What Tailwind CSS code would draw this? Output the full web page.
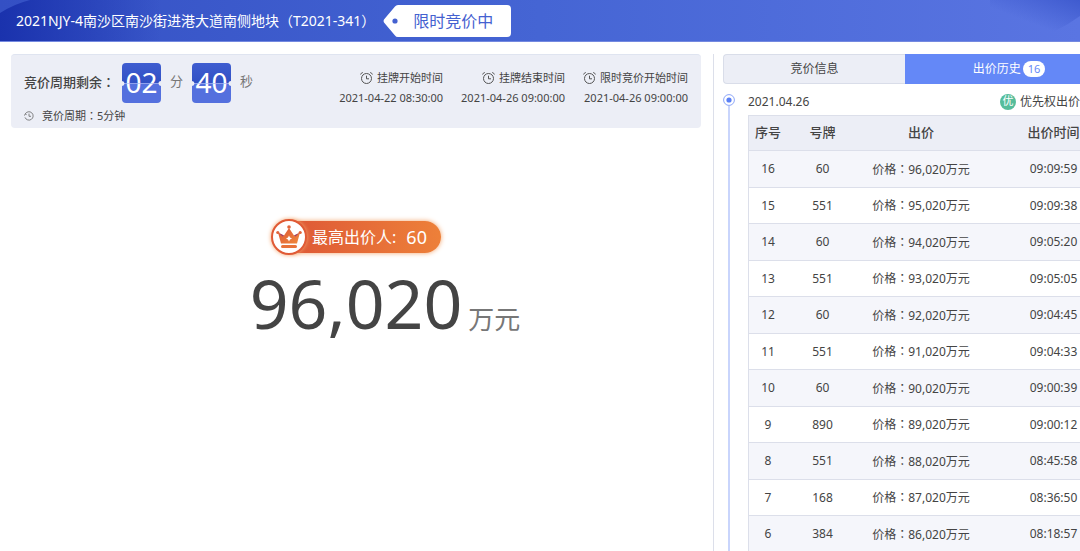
<!DOCTYPE html>
<html lang="zh-CN">
<head>
    <meta charset="UTF-8">
    <meta name="viewport" content="width=device-width, initial-scale=1.0">
    <title>限时竞价</title>
    <script src="https://cdn.jsdelivr.net/npm/@tailwindcss/browser@4"></script>
</head>
<body class="min-h-screen flex flex-col overflow-hidden bg-white text-[#444] font-['Noto_Sans','Noto_Sans_CJK_SC',sans-serif]">
    <!-- Header -->
    <header class="relative h-[42px] shrink-0 flex items-center pl-4 text-white bg-linear-to-r from-[#3450c4] via-[#4565d4] to-[#5a75e2] border-b border-[#7489e0]">
        <svg class="absolute left-0 top-0 w-[160px] h-[41px]" viewBox="0 0 160 41" aria-hidden="true">
            <defs>
                <linearGradient id="arc-left" x1="0" y1="0" x2="1" y2="0">
                    <stop offset="0" stop-color="#1a32ad"/>
                    <stop offset="1" stop-color="#1a32ad" stop-opacity="0"/>
                </linearGradient>
            </defs>
            <path d="M0 13 Q14 4 30 0 H160 V41 H0Z" fill="url(#arc-left)"/>
        </svg>
        <svg class="absolute right-0 top-0 w-[90px] h-[41px]" viewBox="0 0 90 41" aria-hidden="true">
            <defs>
                <linearGradient id="arc-right" x1="0.5" y1="0.6" x2="1" y2="0">
                    <stop offset="0" stop-color="#3f5bcf" stop-opacity="0"/>
                    <stop offset="1" stop-color="#3f5bcf"/>
                </linearGradient>
            </defs>
            <path d="M0 0 H90 V16 Q68 32 40 41 H0Z" fill="url(#arc-right)"/>
        </svg>
        <h1 class="relative text-sm whitespace-nowrap">2021NJY-4南沙区南沙街进港大道南侧地块<span lang="zh-TW" class="font-['Noto_Sans_CJK_TC',sans-serif]">（</span>T2021-341<span lang="zh-TW" class="font-['Noto_Sans_CJK_TC',sans-serif]">）</span></h1>
        <div class="relative flex h-8 ml-2 text-[#4461d0]">
            <svg class="w-4 h-8" viewBox="0 0 16 32" aria-hidden="true">
                <path d="M16 0 H15 Q13 0 12 1.5 L1 14.5 Q0 16 1 17.5 L12 30.5 Q13 32 15 32 H16Z" fill="#fff"/>
                <circle cx="12" cy="16" r="2.6" fill="#4461d0"/>
            </svg>
            <span class="flex items-center rounded-r bg-white pl-[14px] pr-[18px] text-base whitespace-nowrap">限时竞价中</span>
        </div>
    </header>

    <div class="flex flex-1">
        <!-- Left: countdown and current price -->
        <main class="flex-1 min-w-0 pt-3 pl-[11px] pr-3">
            <section class="flex justify-between rounded-sm border-t border-[#dfe4f0] bg-[#eceef6] px-[13px] h-[74px]">
                <div class="pt-2">
                    <div class="flex items-center text-[13px]">
                        <span class="pb-[2px] font-medium text-[#444]">竞价周期剩余<span lang="zh-TW" class="font-['Noto_Sans_CJK_TC',sans-serif]">：</span></span>
                        <span class="relative ml-[7px] w-[39px] h-10 pb-[2px] rounded-sm bg-linear-to-b from-[#3f5dd0] from-0% via-[#3150c4] via-50% to-[#5470de] to-50% flex items-center justify-center text-[28px] leading-10 text-white">02
                            <svg class="absolute inset-0 w-full h-full" viewBox="0 0 39 40" aria-hidden="true">
                                <path d="M0 20.5H39" stroke="#a9b8f2" stroke-opacity=".7"/>
                                <path d="M0 18 A2.5 2.5 0 0 1 0 23Z M39 18 A2.5 2.5 0 0 0 39 23Z" fill="#eceef6"/>
                            </svg>
                        </span>
                        <span class="mx-[9px] pb-[2px] text-[#777]">分</span>
                        <span class="relative w-[39px] h-10 pb-[2px] rounded-sm bg-linear-to-b from-[#3f5dd0] from-0% via-[#3150c4] via-50% to-[#5470de] to-50% flex items-center justify-center text-[28px] leading-10 text-white">40
                            <svg class="absolute inset-0 w-full h-full" viewBox="0 0 39 40" aria-hidden="true">
                                <path d="M0 20.5H39" stroke="#a9b8f2" stroke-opacity=".7"/>
                                <path d="M0 18 A2.5 2.5 0 0 1 0 23Z M39 18 A2.5 2.5 0 0 0 39 23Z" fill="#eceef6"/>
                            </svg>
                        </span>
                        <span class="ml-[9px] pb-[2px] text-[#777]">秒</span>
                    </div>
                    <div class="flex items-center gap-2 mt-1 text-[11px] leading-4">
                        <svg class="w-[10px] h-[10px]" viewBox="0 0 10 10" fill="none" stroke="#666" stroke-width=".8" aria-hidden="true">
                            <path d="M1.2 3 A4.2 4.2 0 1 1 1 6.4 M.4 4.6 L1.2 3 L2.6 3.6 M5 2.6 V5.3 H7"/>
                        </svg>
                        <span>竞价周期<span lang="zh-TW" class="font-['Noto_Sans_CJK_TC',sans-serif]">：</span>5分钟</span>
                    </div>
                </div>
                <div class="flex gap-[18px] pt-[13px] text-[11px] leading-5 text-right whitespace-nowrap">
                    <div>
                        <div class="flex items-center justify-end gap-1">
                            <svg class="w-[13px] h-[13px]" viewBox="0 0 13 13" fill="none" stroke="#555" aria-hidden="true"><circle cx="6.5" cy="6.5" r="5"/><path d="M6.5 3.7V6.8H9M.6 2.5Q1 .9 2.8.5M12.4 2.5Q12 .9 10.2.5"/></svg>
                            <span>挂牌开始时间</span>
                        </div>
                        <time>2021-04-22 08:30:00</time>
                    </div>
                    <div>
                        <div class="flex items-center justify-end gap-1">
                            <svg class="w-[13px] h-[13px]" viewBox="0 0 13 13" fill="none" stroke="#555" aria-hidden="true"><circle cx="6.5" cy="6.5" r="5"/><path d="M6.5 3.7V6.8H9M.6 2.5Q1 .9 2.8.5M12.4 2.5Q12 .9 10.2.5"/></svg>
                            <span>挂牌结束时间</span>
                        </div>
                        <time>2021-04-26 09:00:00</time>
                    </div>
                    <div>
                        <div class="flex items-center justify-end gap-1">
                            <svg class="w-[13px] h-[13px]" viewBox="0 0 13 13" fill="none" stroke="#555" aria-hidden="true"><circle cx="6.5" cy="6.5" r="5"/><path d="M6.5 3.7V6.8H9M.6 2.5Q1 .9 2.8.5M12.4 2.5Q12 .9 10.2.5"/></svg>
                            <span>限时竞价开始时间</span>
                        </div>
                        <time>2021-04-26 09:00:00</time>
                    </div>
                </div>
            </section>

            <!-- Highest bidder -->
            <section class="pt-[91px]">
                <div class="flex justify-center">
                    <div class="flex items-center h-9 rounded-full">
                        <span class="relative z-10 flex items-center justify-center w-9 h-9 rounded-full bg-white border-2 border-[#e05a35] shadow-[0_0_4px_#f3a46c]">
                            <svg class="w-7 h-7" viewBox="0 0 28 28" aria-hidden="true">
                                <defs>
                                    <linearGradient id="crown" x1="0" y1="0" x2="1" y2="1">
                                        <stop offset="0" stop-color="#dd5536"/>
                                        <stop offset="1" stop-color="#f08a3c"/>
                                    </linearGradient>
                                </defs>
                                <path d="M3 9.5 L9 12.5 L14 5 L19 12.5 L25 9.5 L22 20.5 H6Z" fill="url(#crown)"/>
                                <path d="M4 10 L9 12.5 L7.5 13.5Z M24 10 L19 12.5 L20.5 13.5Z" fill="#9c3f6d"/>
                                <g fill="#e2653a"><circle cx="2.8" cy="9.5" r="1.6"/><circle cx="14" cy="4" r="1.8"/><circle cx="25.2" cy="9.5" r="1.6"/></g>
                                <path d="M14 12.5 L15 14.4 L17 15.5 L15 16.6 L14 18.5 L13 16.6 L11 15.5 L13 14.4Z" fill="#fff"/>
                                <rect x="6" y="22" width="16" height="3" rx="1.5" fill="#e8733a"/>
                            </svg>
                        </span>
                        <span class="flex items-center gap-[10px] h-8 -ml-4 pl-[21px] pr-[14px] rounded-r-full bg-linear-to-r from-[#de5836] to-[#ed8039] shadow-[0_0_5px_#f3a46c] text-white text-base whitespace-nowrap">最高出价人:<b class="font-normal text-lg">60</b></span>
                    </div>
                </div>
                <div class="grid grid-cols-[1fr_auto_1fr] items-baseline mt-[6px]">
                    <span></span>
                    <strong class="font-normal text-[68px] leading-[84px]">96,020</strong>
                    <span class="pl-[6px] text-[26px] text-[#777]">万元</span>
                </div>
            </section>
        </main>

        <!-- Right: bid history -->
        <aside class="w-[367px] shrink-0 mt-3 pl-[9px] border-l border-[#dcdfea] overflow-hidden">
            <div class="w-[400px] text-xs">
                <nav class="flex h-[30px] pr-[10px]">
                    <button class="w-[182px] rounded-l-sm border border-r-0 border-[#d9dde9] bg-[#eceef6]">竞价信息</button>
                    <button class="flex-1 flex items-center justify-center gap-[2px] bg-[#6488f7] text-white">出价历史<span class="rounded-full bg-white px-[5px] text-[11px] leading-4 text-[#6488f7]">16</span></button>
                </nav>
                <div class="flex">
                    <!-- Timeline -->
                    <div class="w-3 shrink-0 flex flex-col items-center pt-[10px]">
                        <svg class="w-3 h-3 shrink-0" viewBox="0 0 12 12" aria-hidden="true"><circle cx="6" cy="6" r="5.4" fill="#fff" stroke="#8da6f8"/><circle cx="6" cy="6" r="2.6" fill="#5b80f5"/></svg>
                        <span class="flex-1 w-[2px] bg-[#c9d5fc]"></span>
                    </div>
                    <div class="flex-1 pl-[13px]">
                        <div class="flex items-center justify-between h-[31px] pt-1 pr-[43px]">
                            <time>2021.04.26</time>
                            <span class="flex items-center gap-1"><i class="flex items-center justify-center w-4 h-4 rounded-full bg-[#55bd9b] not-italic text-[11px] text-white">优</i>优先权出价</span>
                        </div>
                        <table class="w-full table-fixed border-separate border-spacing-0 border-t border-l border-[#dcdfea] text-center whitespace-nowrap">
                            <thead>
                                <tr class="h-[35px] bg-[#eceef6] text-[13px] text-[#444]">
                                    <th class="w-[38px] font-medium border-b border-[#dcdfea]">序号</th>
                                    <th class="w-[71px] font-medium border-b border-[#dcdfea]">号牌</th>
                                    <th class="w-[126px] font-medium border-b border-[#dcdfea]">出价</th>
                                    <th class="font-medium border-b border-[#dcdfea]">出价时间</th>
                                </tr>
                            </thead>
                            <tbody id="bid-list"></tbody>
                        </table>
                    </div>
                </div>
            </div>
        </aside>
    </div>

    <script>
        const bids = [
            [16, 60, '96,020', '09:09:59'],
            [15, 551, '95,020', '09:09:38'],
            [14, 60, '94,020', '09:05:20'],
            [13, 551, '93,020', '09:05:05'],
            [12, 60, '92,020', '09:04:45'],
            [11, 551, '91,020', '09:04:33'],
            [10, 60, '90,020', '09:00:39'],
            [9, 890, '89,020', '09:00:12'],
            [8, 551, '88,020', '08:45:58'],
            [7, 168, '87,020', '08:36:50'],
            [6, 384, '86,020', '08:18:57']
        ];

        document.getElementById('bid-list').innerHTML = bids.map(([no, plate, price, time]) => `
            <tr class="h-[37px] even:h-9 odd:bg-[#f5f6fb]">
                <td class="border-b border-[#dcdfea]">${no}</td>
                <td class="border-b border-[#dcdfea]">${plate}</td>
                <td class="border-b border-[#dcdfea]">价格<span lang="zh-TW" class="font-['Noto_Sans_CJK_TC',sans-serif]">：</span>${price}万元</td>
                <td class="border-b border-[#dcdfea]">${time}</td>
            </tr>`).join('');
    </script>
</body>
</html>
